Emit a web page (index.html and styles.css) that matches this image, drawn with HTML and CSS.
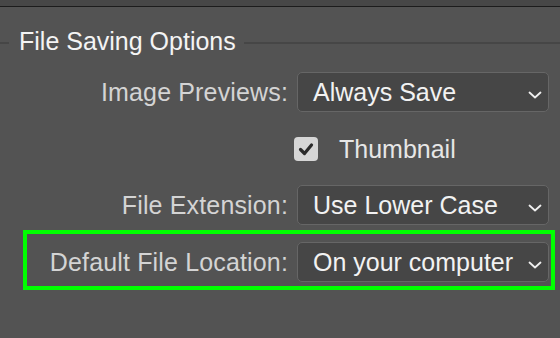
FILE: index.html
```html
<!DOCTYPE html>
<html>
<head>
<meta charset="utf-8">
<link rel="stylesheet" href="styles.css">
</head>
<body>
<div class="topbar"></div>
<section class="options">
  <div class="header">
    <span class="line line-left"></span>
    <span class="title">File Saving Options</span>
    <span class="line line-right"></span>
  </div>
  <div class="row row-first">
    <span class="label">Image Previews:</span>
    <div class="select"><span class="value">Always Save</span><svg class="chev" viewBox="0 0 14 8" width="14" height="8"><path d="M1.5 1.5 L7 6.5 L12.5 1.5" fill="none" stroke="#f0f0f0" stroke-width="1.8" stroke-linecap="round" stroke-linejoin="round"/></svg></div>
  </div>
  <div class="row-check">
    <span class="checkbox"><svg viewBox="0 0 24 24" width="24" height="24"><path d="M6.5 12.5 L10.5 16.5 L17.5 8" fill="none" stroke="#2b2b2b" stroke-width="3.2" stroke-linecap="round" stroke-linejoin="round"/></svg></span>
    <span class="check-label">Thumbnail</span>
  </div>
  <div class="row row-ext">
    <span class="label">File Extension:</span>
    <div class="select"><span class="value">Use Lower Case</span><svg class="chev" viewBox="0 0 14 8" width="14" height="8"><path d="M1.5 1.5 L7 6.5 L12.5 1.5" fill="none" stroke="#f0f0f0" stroke-width="1.8" stroke-linecap="round" stroke-linejoin="round"/></svg></div>
  </div>
  <div class="highlight">
    <div class="row row-inner">
      <span class="label">Default File Location:</span>
      <div class="select"><span class="value">On your computer</span><svg class="chev" viewBox="0 0 14 8" width="14" height="8"><path d="M1.5 1.5 L7 6.5 L12.5 1.5" fill="none" stroke="#f0f0f0" stroke-width="1.8" stroke-linecap="round" stroke-linejoin="round"/></svg></div>
    </div>
  </div>
</section>
</body>
</html>
```
FILE: styles.css
```css
html, body {
  margin: 0;
  padding: 0;
  background: #535353;
  width: 560px;
  height: 338px;
  overflow: hidden;
  font-family: "Liberation Sans", Arial, sans-serif;
}

.topbar {
  height: 6px;
  background: #474747;
  border-bottom: 1px solid #1c1c1c;
}

.options {
  display: flex;
  flex-direction: column;
  padding-top: 19px;
}

.header {
  display: flex;
  align-items: flex-start;
  height: 30px;
}

.line {
  height: 2px;
  background: #464646;
  margin-top: 16px;
}

.line-left {
  width: 9px;
}

.line-right {
  flex: 1;
}

.title {
  font-size: 25px;
  line-height: 30px;
  color: #f4f4f4;
  margin: 0 8px 0 10px;
}

.row {
  display: grid;
  grid-template-columns: 288px 252px;
  column-gap: 9px;
  align-items: center;
}

.row-first {
  margin-top: 16px;
}

.row-ext {
  margin-top: 24px;
}

.label {
  text-align: right;
  font-size: 25px;
  letter-spacing: 0.15px;
  color: #d4d4d4;
  white-space: nowrap;
}

.select {
  box-sizing: border-box;
  height: 40px;
  border: 1px solid #666666;
  border-radius: 5px;
  background: #464646;
  display: flex;
  align-items: center;
  padding: 0 6px 0 15px;
}

.value {
  flex: 1;
  font-size: 25px;
  color: #f2f2f2;
  white-space: nowrap;
}

.chev {
  margin-top: 6px;
}

.row-check {
  display: flex;
  align-items: center;
  padding-left: 294px;
  margin-top: 25px;
  gap: 21px;
}

.checkbox {
  width: 24px;
  height: 24px;
  border-radius: 4px;
  background: #d6d6d6;
  display: flex;
}

.check-label {
  font-size: 25px;
  line-height: 24px;
  color: #e6e6e6;
}

.highlight {
  box-sizing: border-box;
  margin-top: 5px;
  margin-left: 23px;
  width: 532px;
  height: 60px;
  border: 4px solid #00ff00;
  padding: 8px 2px 8px 0;
}

.row-inner {
  grid-template-columns: 261px 252px;
}
```
